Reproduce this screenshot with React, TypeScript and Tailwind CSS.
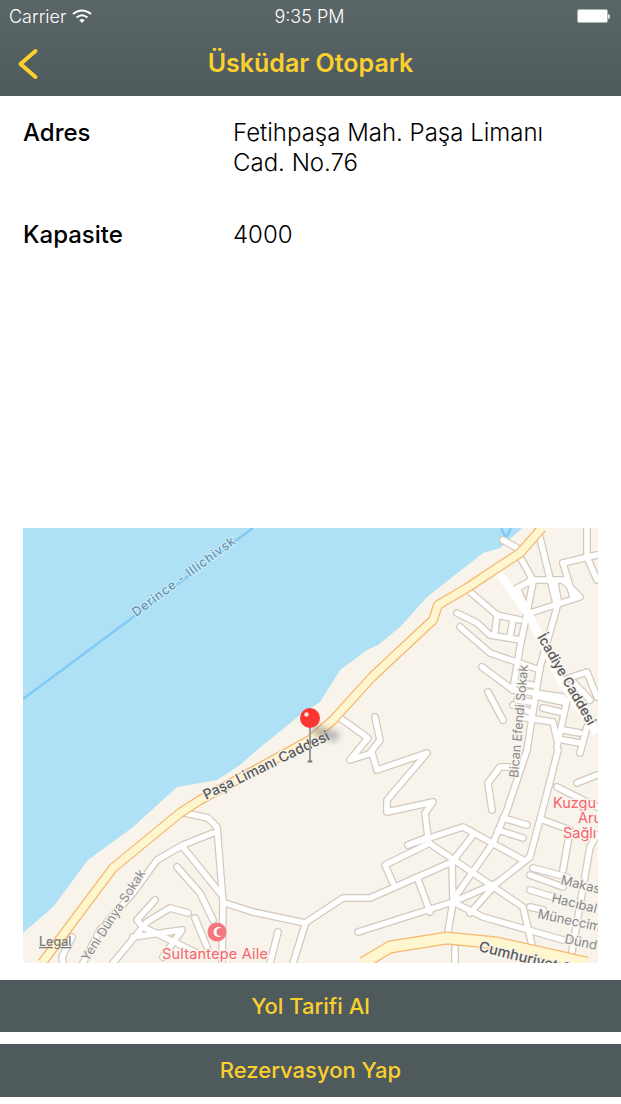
const font = "font-['Inter','Liberation_Sans',sans-serif]";

const water = "23,528 522,528 500,548 483,553 427,597 400,627 378,645 367,650 340,670 320,702 300,715 257,750 240,765 217,780 177,787 133,827 88,860 53,907 23,933";
const mainRoad = "542,528 520,553 497,568 467,588 438,605 433,620 372,677 333,720 310,740 200,800 180,813 113,868 42,963";
const cumhuriyet = "363,963 390,947 447,938 497,943 587,963";

const streets = [
  "185,813 208,818 217,827 223,903 222,963",
  "213,833 183,845 157,860 133,893 100,930 83,963",
  "183,847 220,893",
  "177,867 200,893 213,920",
  "225,903 253,912 305,923 343,898 370,898 452,862 453,902 447,938",
  "305,925 293,963",
  "278,932 270,963",
  "155,900 137,920 143,927 197,953",
  "133,937 182,930 163,957",
  "188,913 170,908 147,922 113,963",
  "195,918 207,947",
  "72,937 62,957 63,963",
  "340,718 368,738 350,760 372,753 377,770 427,753 387,800 387,812 433,802 425,813 428,837 408,845",
  "375,717 380,740 370,753",
  "408,845 463,827 523,860",
  "430,843 385,865 393,883",
  "358,932 453,902 497,883",
  "417,877 430,912",
  "432,845 523,907 533,950 537,963",
  "452,862 473,835",
  "453,900 493,843 507,810 527,750 540,667 557,607 538,530",
  "470,913 497,883 530,857 547,793 558,750",
  "453,902 483,917 563,940",
  "492,810 488,783 500,767 510,767",
  "503,818 527,825",
  "498,830 523,838",
  "533,868 567,877",
  "530,875 563,887",
  "530,890 553,897",
  "530,907 543,910",
  "557,787 597,807",
  "543,820 570,830 563,870",
  "570,963 590,847 597,835",
  "577,783 597,775",
  "455,948 455,963",
  "503,540 517,548",
  "520,557 533,580 517,588 530,617",
  "530,580 563,580 580,597 530,613",
  "533,582 527,613 520,647 513,690",
  "563,563 597,555",
  "563,563 573,597",
  "587,528 587,557 597,580",
  "555,583 558,600",
  "468,590 497,615 520,620",
  "497,615 495,632",
  "513,620 510,637",
  "457,613 477,623 490,635 520,640",
  "460,627 490,653 540,670",
  "482,667 513,690 563,697",
  "488,692 503,720",
  "517,683 533,685",
  "517,700 530,702",
  "513,705 530,712",
  "520,717 553,722 557,740",
  "540,697 563,702",
  "543,708 560,712",
  "563,730 580,733",
  "563,740 580,743",
  "567,700 557,747",
  "587,727 580,753",
  "563,680 587,672 597,697",
  "573,682 590,700",
];

function MapDrawing() {
  return (
    <svg viewBox="23 528 575 435" className="block w-full h-full" fontFamily="Inter, 'Liberation Sans', sans-serif">
      <defs>
        <filter id="pin-shadow" x="-50%" y="-50%" width="200%" height="200%">
          <feGaussianBlur stdDeviation="3" />
        </filter>
      </defs>
      <rect x="23" y="528" width="575" height="435" fill="#f8f3eb" />
      <polygon points={water} fill="#aee0f6" />
      <line x1="23" y1="699" x2="253" y2="528" stroke="#83c9f6" strokeWidth="2.5" />
      <path d="M501 528 L506 538 L511 528" fill="none" stroke="#83c9f6" strokeWidth="2.5" />

      {streets.map((p, i) => (
        <polyline key={i} points={p} fill="none" stroke="#d3cabd" strokeWidth="8" strokeLinecap="round" strokeLinejoin="round" />
      ))}
      {streets.map((p, i) => (
        <polyline key={i} points={p} fill="none" stroke="#ffffff" strokeWidth="5.5" strokeLinecap="round" strokeLinejoin="round" />
      ))}
      <polyline points="497,570 530,617 560,680 597,733" fill="none" stroke="#ffffff" strokeWidth="8" />

      <polyline points={cumhuriyet} fill="none" stroke="#f6b76e" strokeWidth="13" strokeLinejoin="round" />
      <polyline points={cumhuriyet} fill="none" stroke="#fdf6cf" strokeWidth="10.5" strokeLinejoin="round" />
      <polyline points={mainRoad} fill="none" stroke="#f6b76e" strokeWidth="10" strokeLinejoin="round" />
      <polyline points={mainRoad} fill="none" stroke="#fdf6cf" strokeWidth="7.5" strokeLinejoin="round" />

      <g stroke="#f8f3eb" strokeWidth="2.5" style={{ paintOrder: "stroke" }}>
        <text x="0" y="0" transform="translate(136,617) rotate(-36.5)" fontSize="12.5" letterSpacing="0.8" fill="#5f8ba3" stroke="#c5e9f8">
          Derince - Illichivsk
        </text>
        <text x="0" y="0" transform="translate(206,800) rotate(-26)" fontSize="14" fontWeight="500" fill="#55585b">
          Paşa Limanı Caddesi
        </text>
        <text x="0" y="0" transform="translate(537,637) rotate(60)" fontSize="13.5" fontWeight="500" fill="#55585b">
          İcadiye Caddesi
        </text>
        <text x="0" y="0" transform="translate(518,778) rotate(-85)" fontSize="12.5" fill="#85898c">
          Bican Efendi Sokak
        </text>
        <text x="0" y="0" transform="translate(88,962) rotate(-57)" fontSize="12.5" fill="#85898c">
          Yeni Dünya Sokak
        </text>
        <text x="478" y="951" transform="rotate(14 478 951)" fontSize="14.5" fontWeight="500" fill="#55585b">
          Cumhuriyet Caddesi
        </text>
        <text x="560" y="884" transform="rotate(14 560 884)" fontSize="13" fill="#85898c">Makas</text>
        <text x="551" y="902" transform="rotate(14 551 902)" fontSize="13" fill="#85898c">Hacıbal</text>
        <text x="537" y="918" transform="rotate(12 537 918)" fontSize="13" fill="#85898c">Müneccim</text>
        <text x="564" y="943" transform="rotate(12 564 943)" fontSize="13" fill="#85898c">Dünd</text>
        <text x="553" y="808" fontSize="14.5" fill="#f7636e">Kuzgu</text>
        <text x="578" y="823" fontSize="14.5" fill="#f7636e">Aru</text>
        <text x="563" y="838" fontSize="14.5" fill="#f7636e">Sağlı</text>
        <text x="162" y="959" fontSize="14.5" letterSpacing="0.2" fill="#f7636e">Sultantepe Aile</text>
      </g>

      <circle cx="217" cy="932" r="9.5" fill="#f4777f" />
      <circle cx="218.5" cy="932" r="5" fill="#ffffff" />
      <circle cx="220.5" cy="932" r="4" fill="#f4777f" />

      <text x="39" y="946" fontSize="12.5" fontWeight="500" fill="#77797a" textDecoration="underline">Legal</text>

      <polygon points="314,724 340,733 336,742 312,734" fill="#6b6b6b" opacity="0.45" filter="url(#pin-shadow)" />
      <rect x="309" y="726" width="2" height="35" fill="#9b9ca0" />
      <rect x="307.5" y="760.5" width="5" height="2" rx="1" fill="#77787c" />
      <circle cx="310" cy="718" r="10" fill="#fb3530" />
      <circle cx="306.5" cy="714.5" r="2.2" fill="#ffe3e0" />
    </svg>
  );
}

function ActionButton({ label, tall }: { label: string; tall?: boolean }) {
  return (
    <button className={`w-full ${tall ? "h-[53px]" : "h-[52px]"} bg-[#4f5a5c] text-[#fbd02e] text-[22px] font-medium flex items-center justify-center`}>
      {label}
    </button>
  );
}

export default function App() {
  return (
    <div className={`w-[621px] h-[1104px] bg-white flex flex-col overflow-hidden ${font}`}>
      <div className="h-[96px] bg-gradient-to-b from-[#5b6668] to-[#4f5a5c] flex flex-col">
        <div className="h-[32px] grid grid-cols-3 items-center text-white text-[18px] font-[350] pl-[9px] pr-[11px]">
          <div className="flex items-center gap-[6px]">
            <span>Carrier</span>
            <svg width="20" height="15" viewBox="0 0 20 15" fill="none" stroke="white" strokeWidth="2">
              <path d="M1 5 Q10 -2 19 5" />
              <path d="M4.5 8.5 Q10 4 15.5 8.5" />
              <path d="M10 14 L7.3 11 Q10 9 12.7 11 Z" fill="white" stroke="none" />
            </svg>
          </div>
          <div className="text-center">9:35 PM</div>
          <div className="flex justify-end items-center">
            <div className="w-[31px] h-[14px] bg-white rounded-[2px] border border-[#aab0b1]" />
            <div className="w-[2px] h-[5px] bg-white/80 rounded-r-sm" />
          </div>
        </div>
        <div className="flex-1 grid grid-cols-[1fr_auto_1fr] items-center">
          <div className="pl-[17px]">
            <svg className="block" width="22" height="32" viewBox="0 0 22 32" fill="none" stroke="#fbd02e" strokeWidth="4" strokeLinecap="round" strokeLinejoin="round">
              <path d="M18.5 3 L3.5 16 L18.5 29" />
            </svg>
          </div>
          <div className="text-[#fbd02e] text-[25px] font-semibold">Üsküdar Otopark</div>
          <div />
        </div>
      </div>

      <div className="h-[432px] px-[23px] pt-[22px] text-[24px] leading-[30px] text-black">
        <div className="grid grid-cols-[210px_1fr] gap-y-[42px]">
          <div className="font-medium">Adres</div>
          <div className="pr-[40px] font-[350]">Fetihpaşa Mah. Paşa Limanı Cad. No.76</div>
          <div className="font-medium">Kapasite</div>
          <div className="font-[350]">4000</div>
        </div>
      </div>

      <div className="mx-[23px] h-[435px]">
        <MapDrawing />
      </div>

      <div className="mt-[17px]">
        <ActionButton label="Yol Tarifi Al" />
      </div>
      <div className="mt-[12px]">
        <ActionButton label="Rezervasyon Yap" tall />
      </div>
    </div>
  );
}
